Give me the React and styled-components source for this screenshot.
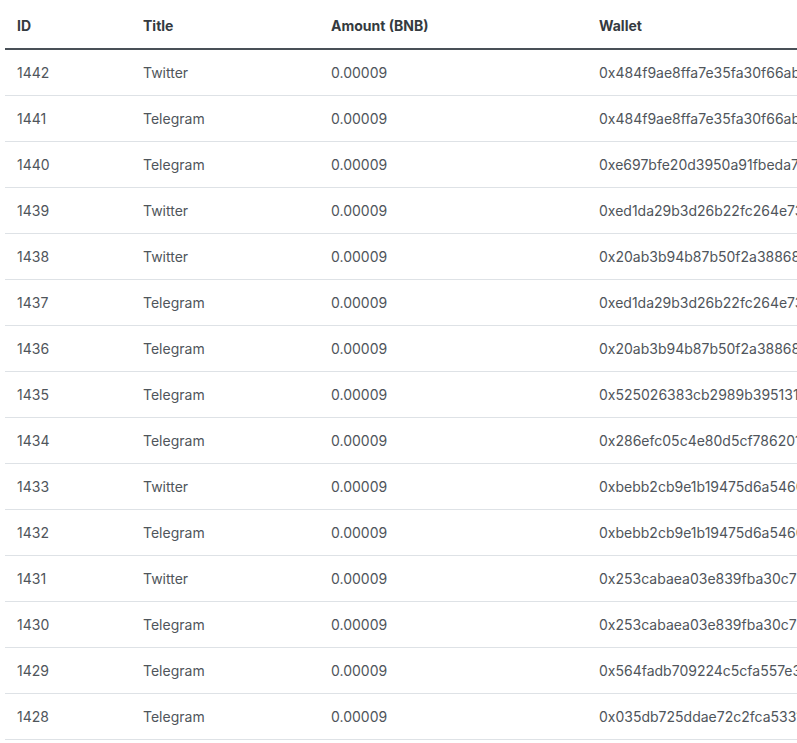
import React from 'react'
import styled, { createGlobalStyle } from 'styled-components'

const Global = createGlobalStyle`
  html, body { margin: 0; padding: 0; background: #fff; overflow: hidden; }
  body { font-family: Inter, "Noto Sans", sans-serif; }
`

const rows = [
  [1442, 'Twitter', '0x484f9ae8ffa7e35fa30f66ab21c4d9e07a1f3b52'],
  [1441, 'Telegram', '0x484f9ae8ffa7e35fa30f66ab21c4d9e07a1f3b52'],
  [1440, 'Telegram', '0xe697bfe20d3950a91fbeda7c03b8e214f6a9d15c'],
  [1439, 'Twitter', '0xed1da29b3d26b22fc264e73a9b10c5d4e82f6a71'],
  [1438, 'Twitter', '0x20ab3b94b87b50f2a38868d1e5c9a4f0372b6e19'],
  [1437, 'Telegram', '0xed1da29b3d26b22fc264e73a9b10c5d4e82f6a71'],
  [1436, 'Telegram', '0x20ab3b94b87b50f2a38868d1e5c9a4f0372b6e19'],
  [1435, 'Telegram', '0x525026383cb2989b395131f7d0a6c4e82b9e5a30'],
  [1434, 'Telegram', '0x286efc05c4e80d5cf786201a3b9e47d5c0f26a84'],
  [1433, 'Twitter', '0xbebb2cb9e1b19475d6a5460c3f82e19d7a4b5e03'],
  [1432, 'Telegram', '0xbebb2cb9e1b19475d6a5460c3f82e19d7a4b5e03'],
  [1431, 'Twitter', '0x253cabaea03e839fba30c71d84e5f2a09b6c3d47'],
  [1430, 'Telegram', '0x253cabaea03e839fba30c71d84e5f2a09b6c3d47'],
  [1429, 'Telegram', '0x564fadb709224c5cfa557e3b19d0a4f6c8e2b715'],
  [1428, 'Telegram', '0x035db725ddae72c2fca53318e4b0d9f7a6c25e90'],
]

const App = () => (
  <Page>
    <Global />
    <Table>
      <colgroup>
        <col style={{ width: 126 }} />
        <col style={{ width: 188 }} />
        <col style={{ width: 268 }} />
        <col style={{ width: 420 }} />
      </colgroup>
      <thead>
        <tr>
          <Th>ID</Th>
          <Th>Title</Th>
          <Th>Amount (BNB)</Th>
          <Th>Wallet</Th>
        </tr>
      </thead>
      <tbody>
        {rows.map(([id, title, wallet]) => (
          <tr key={id}>
            <Td>{id}</Td>
            <Td>{title}</Td>
            <Td>0.00009</Td>
            <Td>{wallet}</Td>
          </tr>
        ))}
      </tbody>
    </Table>
  </Page>
)

const Page = styled.div`
  padding-left: 5px;
  width: 1100px;
`

const Table = styled.table`
  border-collapse: collapse;
  table-layout: fixed;
  width: 1002px;
  font-size: 14px;
  color: #4f555b;
  white-space: nowrap;
  font-feature-settings: "calt" 1;
`

const Th = styled.th`
  text-align: left;
  font-weight: 700;
  color: #343a40;
  height: 49px;
  padding: 3px 12px 0;
  border-bottom: 2px solid #495057;
  vertical-align: middle;
  box-sizing: border-box;
`

const Td = styled.td`
  height: 46px;
  padding: 0 12px;
  border-bottom: 1px solid #dee2e6;
  vertical-align: middle;
  box-sizing: border-box;
  overflow: hidden;
`

export default App
